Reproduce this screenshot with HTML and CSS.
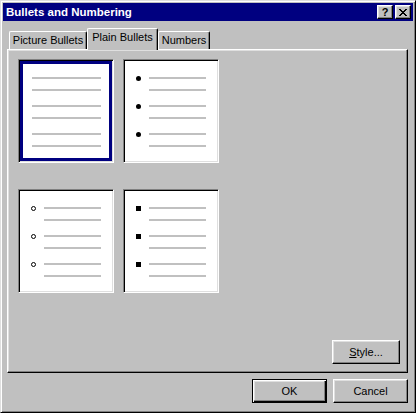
FILE: index.html
```html
<!DOCTYPE html>
<html lang="en">
<head>
  <meta charset="UTF-8">
  <title>Bullets and Numbering</title>
  <link rel="stylesheet" href="styles.css">
</head>
<body>
  <div class="window">
    <div class="titlebar">
      <span class="title">Bullets and Numbering</span>
      <div class="caption-btns">
        <button class="caption-btn help">?</button>
        <button class="caption-btn close">
          <svg width="8" height="7" viewBox="0 0 8 7" shape-rendering="crispEdges">
            <path d="M0 0h2v1h1v1h2v-1h1v-1h2v1h-1v1h-1v1h-1v1h1v1h1v1h1v1h-2v-1h-1v-1h-2v1h-1v1h-2v-1h1v-1h1v-1h1v-1h-1v-1h-1v-1h-1z" fill="#000"/>
          </svg>
        </button>
      </div>
    </div>

    <div class="client">
      <div class="tabs">
        <div class="tab tab-picture">Picture Bullets</div>
        <div class="tab tab-plain active">Plain Bullets</div>
        <div class="tab tab-numbers">Numbers</div>
      </div>

      <div class="panel">
        <div class="previews">
          <!-- None -->
          <div class="preview selected">
            <div class="group"><div class="row"><span class="line"></span></div><div class="row"><span class="line"></span></div></div>
            <div class="group"><div class="row"><span class="line"></span></div><div class="row"><span class="line"></span></div></div>
            <div class="group"><div class="row"><span class="line"></span></div><div class="row"><span class="line"></span></div></div>
          </div>

          <!-- Filled dot -->
          <div class="preview bulleted">
            <div class="group"><div class="row"><span class="bullet dot"></span><span class="line"></span></div><div class="row"><span class="bullet"></span><span class="line"></span></div></div>
            <div class="group"><div class="row"><span class="bullet dot"></span><span class="line"></span></div><div class="row"><span class="bullet"></span><span class="line"></span></div></div>
            <div class="group"><div class="row"><span class="bullet dot"></span><span class="line"></span></div><div class="row"><span class="bullet"></span><span class="line"></span></div></div>
          </div>

          <!-- Hollow circle -->
          <div class="preview bulleted">
            <div class="group"><div class="row"><span class="bullet ring"></span><span class="line"></span></div><div class="row"><span class="bullet"></span><span class="line"></span></div></div>
            <div class="group"><div class="row"><span class="bullet ring"></span><span class="line"></span></div><div class="row"><span class="bullet"></span><span class="line"></span></div></div>
            <div class="group"><div class="row"><span class="bullet ring"></span><span class="line"></span></div><div class="row"><span class="bullet"></span><span class="line"></span></div></div>
          </div>

          <!-- Square -->
          <div class="preview bulleted">
            <div class="group"><div class="row"><span class="bullet square"></span><span class="line"></span></div><div class="row"><span class="bullet"></span><span class="line"></span></div></div>
            <div class="group"><div class="row"><span class="bullet square"></span><span class="line"></span></div><div class="row"><span class="bullet"></span><span class="line"></span></div></div>
            <div class="group"><div class="row"><span class="bullet square"></span><span class="line"></span></div><div class="row"><span class="bullet"></span><span class="line"></span></div></div>
          </div>
        </div>

        <div class="panel-actions">
          <button class="btn btn-style"><u>S</u>tyle...</button>
        </div>
      </div>

      <div class="dialog-actions">
        <button class="btn default">OK</button>
        <button class="btn">Cancel</button>
      </div>
    </div>
  </div>
</body>
</html>
```

FILE: styles.css
```css
* {
  box-sizing: border-box;
}
body {
  margin: 0;
  background-color: #c0c0c0;
  font-family: 'Liberation Sans', Arial, sans-serif;
  font-size: 11px;
  color: #000;
}
.window {
  width: 416px;
  height: 413px;
  padding: 1px;
  display: flex;
  flex-direction: column;
  background-color: #c0c0c0;
  border: 1px solid;
  border-color: #dfdfdf #000 #000 #dfdfdf;
  box-shadow: inset 1px 1px #fff, inset -1px -1px #808080;
}
.titlebar {
  height: 18px;
  margin: 1px;
  margin-bottom: 0;
  padding: 0 2px 0 3px;
  display: flex;
  align-items: center;
  justify-content: space-between;
  background-color: #000080;
  color: #fff;
}
.title {
  font-weight: bold;
  font-size: 11.5px;
}
.caption-btns {
  display: flex;
  gap: 1px;
}
.caption-btn {
  width: 16px;
  height: 14px;
  padding: 0;
  margin: 0;
  display: flex;
  align-items: center;
  justify-content: center;
  background-color: #c0c0c0;
  border: 1px solid;
  border-color: #fff #000 #000 #fff;
  box-shadow: inset -1px -1px #808080, inset 1px 1px #dfdfdf;
  font-family: 'Liberation Sans', Arial, sans-serif;
  font-weight: bold;
  font-size: 11px;
  line-height: 1;
  color: #000;
}
.caption-btn.close {
  margin-left: 1px;
}
.client {
  flex: 1;
  padding: 7px 6px 6px 5px;
  display: flex;
  flex-direction: column;
}

/* tabs */
.tabs {
  height: 21px;
  padding-left: 2px;
  display: flex;
  align-items: flex-end;
  position: relative;
  z-index: 1;
}
.tab {
  height: 18px;
  padding-top: 2px;
  text-align: center;
  background-color: #c0c0c0;
  border: 1px solid;
  border-bottom: none;
  border-color: #fff #000 #000 #fff;
  border-radius: 2px 2px 0 0;
  box-shadow: inset -1px 0 #808080;
}
.tab-picture {
  width: 78px;
}
.tab-plain {
  width: 71px;
}
.tab-numbers {
  width: 52px;
}
.tab.active {
  height: 22px;
  margin-bottom: -1px;
  padding-top: 2px;
}
.panel {
  height: 324px;
  display: flex;
  flex-direction: column;
  padding: 9px 7px 8px 10px;
  border: 1px solid;
  border-color: #fff #000 #000 #fff;
  box-shadow: inset -1px -1px #808080, inset 1px 1px #dfdfdf;
}
.previews {
  display: grid;
  grid-template-columns: 96px 96px;
  grid-template-rows: 104px 104px;
  column-gap: 9px;
  row-gap: 26px;
}
.preview {
  width: 96px;
  height: 104px;
  padding: 17px 12px 0 13px;
  display: flex;
  flex-direction: column;
  gap: 14px;
  background-color: #fff;
  border: 1px solid;
  border-color: #808080 #fff #fff #808080;
  box-shadow: inset 1px 1px #000, inset -1px -1px #dfdfdf;
}
.preview.selected {
  box-shadow: inset 1px 1px #000, inset -1px -1px #dfdfdf, inset 0 0 0 4px #000080;
}
.preview.bulleted {
  padding-left: 12px;
}
.group {
  display: flex;
  flex-direction: column;
  gap: 10px;
}
.row {
  height: 2px;
  display: flex;
  align-items: center;
}
.line {
  flex: 1;
  height: 2px;
  background-color: #c0c0c0;
}
.bullet {
  width: 5px;
  height: 5px;
  margin-right: 8px;
  flex-shrink: 0;
}
.bullet.dot {
  background-color: #000;
  border-radius: 50%;
}
.bullet.ring {
  border: 1px solid #000;
  border-radius: 50%;
}
.bullet.square {
  background-color: #000;
}
.panel-actions {
  margin-top: auto;
  display: flex;
  justify-content: flex-end;
}

/* buttons */
.btn {
  width: 75px;
  height: 24px;
  padding: 0;
  background-color: #c0c0c0;
  border: 1px solid;
  border-color: #fff #000 #000 #fff;
  box-shadow: inset -1px -1px #808080, inset 1px 1px #dfdfdf;
  font-family: 'Liberation Sans', Arial, sans-serif;
  font-size: 11px;
  color: #000;
}
.btn-style {
  width: 68px;
}
.btn.default {
  border-color: #000;
  box-shadow: inset 1px 1px #fff, inset -1px -1px #000, inset -2px -2px #808080, inset 2px 2px #dfdfdf;
}
.dialog-actions {
  margin-top: 6px;
  display: flex;
  justify-content: flex-end;
  gap: 6px;
}
```
